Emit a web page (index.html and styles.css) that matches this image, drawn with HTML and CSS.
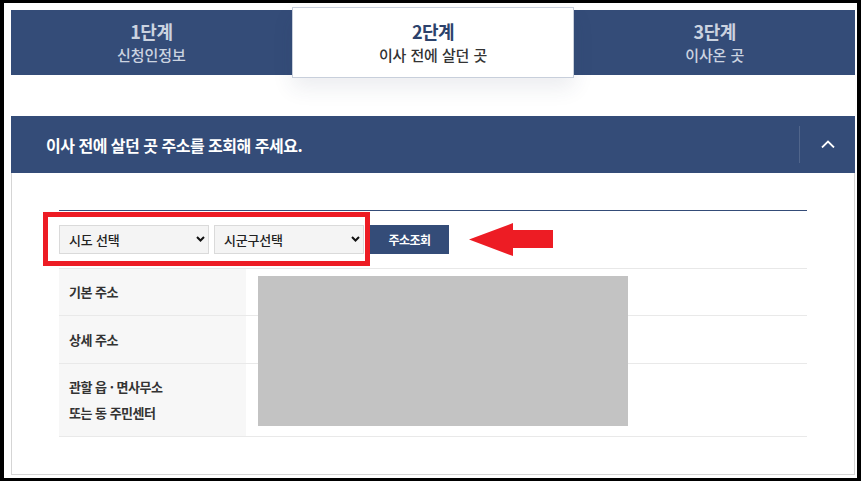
FILE: index.html
```html
<!DOCTYPE html>
<html lang="ko">
<head>
    <meta charset="UTF-8">
    <meta name="viewport" content="width=device-width, initial-scale=1.0">
    <title>전입신고 - 이사 전에 살던 곳</title>
    <link rel="stylesheet" href="styles.css">
</head>
<body>

    <div class="frame">
        <ul class="steps">
            <li class="step">
                <strong>1단계</strong>
                <span>신청인정보</span>
            </li>
            <li class="step active">
                <strong>2단계</strong>
                <span>이사 전에 살던 곳</span>
            </li>
            <li class="step">
                <strong>3단계</strong>
                <span>이사온 곳</span>
            </li>
        </ul>

        <section class="panel">
            <div class="panel-head">
                <h2>이사 전에 살던 곳 주소를 조회해 주세요.</h2>
                <button class="toggle" type="button" aria-label="접기">
                    <svg width="14" height="8" viewBox="0 0 14 8">
                        <polyline points="1,7.5 7,1.5 13,7.5" fill="none" stroke="#fff" stroke-width="1.8"/>
                    </svg>
                </button>
            </div>

            <div class="panel-body">
                <div class="search-row">
                    <div class="select-wrap">
                        <select id="sido">
                            <option value="">시도 선택</option>
                        </select>
                        <svg class="caret" width="9" height="6" viewBox="0 0 9 6">
                            <polyline points="1,1 4.5,4.5 8,1" fill="none" stroke="#111" stroke-width="2"/>
                        </svg>
                    </div>
                    <div class="select-wrap">
                        <select id="sigungu">
                            <option value="">시군구선택</option>
                        </select>
                        <svg class="caret" width="9" height="6" viewBox="0 0 9 6">
                            <polyline points="1,1 4.5,4.5 8,1" fill="none" stroke="#111" stroke-width="2"/>
                        </svg>
                    </div>
                    <button class="search-btn" type="button">주소조회</button>
                    <svg class="arrow" width="84" height="33" viewBox="0 0 84 33">
                        <polygon points="0,16.5 44,0 44,7 84,7 84,25 44,25 44,33" fill="#ed1c24"/>
                    </svg>
                </div>

                <div class="addr-row">
                    <div class="label">기본 주소</div>
                    <div class="value"></div>
                </div>
                <div class="addr-row second">
                    <div class="label">상세 주소</div>
                    <div class="value"></div>
                </div>
                <div class="addr-row third">
                    <div class="label">관할 읍 · 면사무소<br>또는 동 주민센터</div>
                    <div class="value"></div>
                </div>

                <!-- 캡처용 표시 -->
                <span class="highlight"></span>
                <div class="mask"></div>
            </div>
        </section>
    </div>

</body>
</html>
```

FILE: styles.css
```css
* {
    box-sizing: border-box;
}

body {
    margin: 0;
    background-color: #000;
    font-family: "Noto Sans CJK KR", "Noto Sans", sans-serif;
    overflow: hidden;
}

.frame {
    width: 853px;
    height: 475px;
    margin: 3px 4px;
    padding: 7px 2px 0 7px;
    background-color: #fff;
}

/* steps */
.steps {
    display: flex;
    height: 65px;
    margin: 0;
    padding: 0;
    list-style: none;
    background-color: #344c78;
}

.step {
    flex: 1;
    display: flex;
    flex-direction: column;
    align-items: center;
    justify-content: center;
    color: #cbd3e0;
}

.step strong {
    font-size: 18px;
    line-height: 24px;
    letter-spacing: -0.5px;
}

.step span {
    font-size: 15px;
    font-weight: 500;
    line-height: 24px;
    letter-spacing: -0.1px;
}

.step.active {
    position: relative;
    z-index: 1;
    margin: -3px 0;
    background-color: #fff;
    border: 1px solid #c8cfdb;
    box-shadow: 0 10px 20px rgba(40, 55, 90, 0.09);
}

.step.active strong {
    color: #2c426b;
}

.step.active span {
    color: #333;
}

/* panel */
.panel {
    margin-top: 41px;
}

.panel-head {
    display: flex;
    align-items: center;
    height: 57px;
    background-color: #344c78;
}

.panel-head h2 {
    flex: 1;
    margin: 0;
    padding-left: 35px;
    color: #fff;
    font-size: 16px;
    font-weight: bold;
    letter-spacing: -0.5px;
}

.toggle {
    display: flex;
    align-items: center;
    justify-content: center;
    width: 56px;
    height: 37px;
    padding: 0 0 2px;
    background: none;
    border: none;
    border-left: 1px solid rgba(255, 255, 255, 0.14);
}

.panel-body {
    position: relative;
    height: 302px;
    padding: 37px 47px 0;
    border: 1px solid #d5d5d5;
    border-top: none;
}

.search-row {
    display: flex;
    align-items: center;
    height: 59px;
    padding: 14px 0;
    border-top: 1px solid #344c78;
    border-bottom: 1px solid #e8e8e8;
}

.select-wrap {
    position: relative;
    width: 150px;
    height: 29px;
    margin-right: 5px;
}

.select-wrap select {
    width: 100%;
    height: 100%;
    padding: 0 20px 0 9px;
    appearance: none;
    background-color: #f4f4f4;
    border: 1px solid #dadada;
    border-radius: 0;
    color: #222;
    font-family: inherit;
    font-size: 13px;
    font-weight: 500;
    letter-spacing: -0.2px;
}

.select-wrap .caret {
    position: absolute;
    right: 4px;
    top: 11px;
    pointer-events: none;
}

.search-btn {
    width: 79px;
    height: 29px;
    margin-left: 1px;
    background-color: #344c78;
    border: none;
    color: #fff;
    font-family: inherit;
    font-size: 12px;
    font-weight: bold;
    letter-spacing: -0.5px;
}

.arrow {
    margin-left: 20px;
}

.addr-row {
    display: grid;
    grid-template-columns: 187px 1fr;
    height: 47px;
    border-bottom: 1px solid #e9e9e9;
}

.addr-row.second {
    height: 48px;
}

.addr-row.third {
    height: 73px;
}

.addr-row .label {
    display: flex;
    align-items: center;
    padding-left: 10px;
    background-color: #f7f7f7;
    color: #333;
    font-size: 13px;
    font-weight: bold;
    line-height: 26px;
    letter-spacing: -0.5px;
}

.highlight {
    position: absolute;
    left: 31px;
    top: 39px;
    width: 327px;
    height: 54px;
    border: 5px solid #ed1c24;
}

.mask {
    position: absolute;
    left: 246px;
    top: 103px;
    width: 370px;
    height: 150px;
    background-color: #c3c3c3;
}
```
